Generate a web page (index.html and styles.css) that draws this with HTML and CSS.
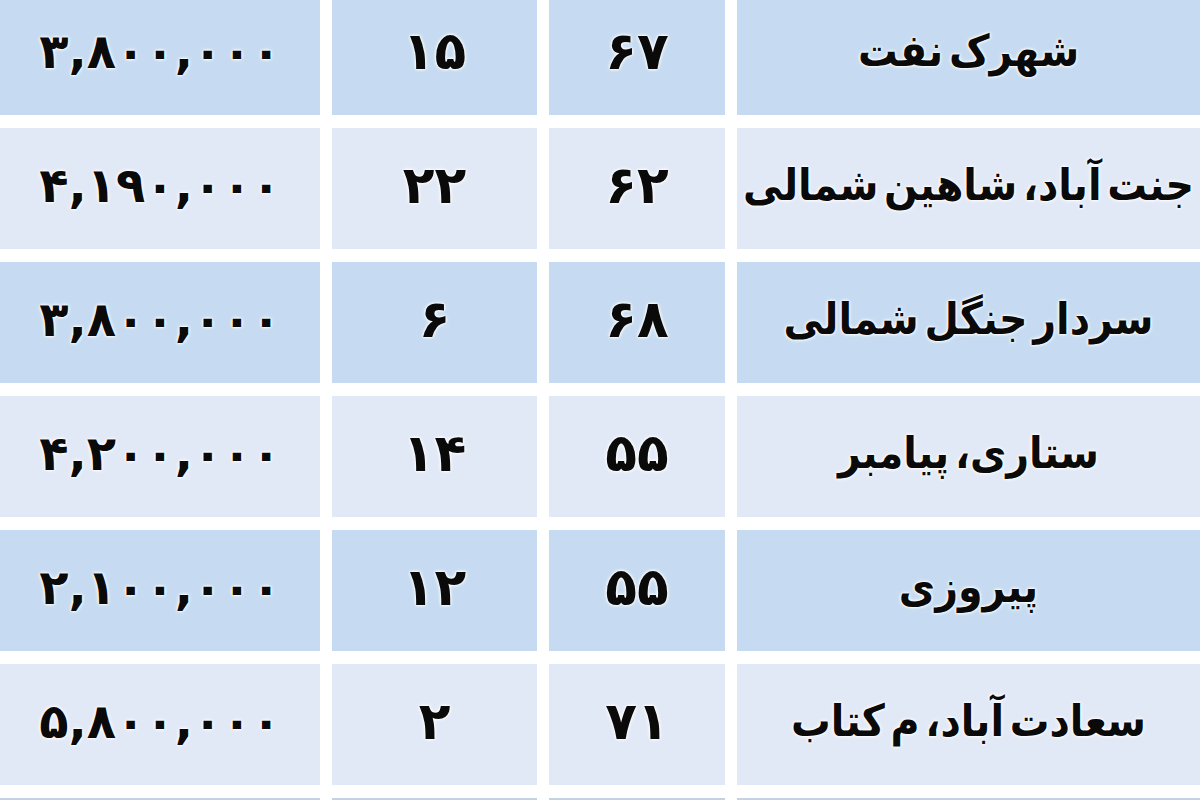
FILE: index.html
```html
<!DOCTYPE html>
<html lang="fa">
<head>
<meta charset="utf-8">
<title>جدول قیمت</title>
<link rel="stylesheet" href="styles.css">
</head>
<body>
<div class="table">
  <div class="row dark">
    <div class="cell price">۳,۸۰۰,۰۰۰</div>
    <div class="cell num">۱۵</div>
    <div class="cell num">۶۷</div>
    <div class="cell name">شهرک نفت</div>
  </div>
  <div class="row light">
    <div class="cell price">۴,۱۹۰,۰۰۰</div>
    <div class="cell num">۲۲</div>
    <div class="cell num">۶۲</div>
    <div class="cell name">جنت آباد، شاهین شمالی</div>
  </div>
  <div class="row dark">
    <div class="cell price">۳,۸۰۰,۰۰۰</div>
    <div class="cell num">۶</div>
    <div class="cell num">۶۸</div>
    <div class="cell name">سردار جنگل شمالی</div>
  </div>
  <div class="row light">
    <div class="cell price">۴,۲۰۰,۰۰۰</div>
    <div class="cell num">۱۴</div>
    <div class="cell num">۵۵</div>
    <div class="cell name">ستاری، پیامبر</div>
  </div>
  <div class="row dark">
    <div class="cell price">۲,۱۰۰,۰۰۰</div>
    <div class="cell num">۱۲</div>
    <div class="cell num">۵۵</div>
    <div class="cell name">پیروزی</div>
  </div>
  <div class="row light">
    <div class="cell price">۵,۸۰۰,۰۰۰</div>
    <div class="cell num">۲</div>
    <div class="cell num">۷۱</div>
    <div class="cell name">سعادت آباد، م کتاب</div>
  </div>
  <div class="row tail">
    <div class="cell price"></div>
    <div class="cell num"></div>
    <div class="cell num"></div>
    <div class="cell name"></div>
  </div>
</div>
</body>
</html>
```

FILE: styles.css
```css
html, body {
  margin: 0;
  padding: 0;
  background: #ffffff;
  overflow: hidden;
}

body {
  width: 1200px;
  height: 800px;
  font-family: "DejaVu Sans", sans-serif;
  font-weight: bold;
  color: #0a0a0a;
}

.table {
  display: flex;
  flex-direction: column;
  gap: 13px;
  height: 812px;
  margin-top: -6px;
  overflow: hidden;
}

.row {
  display: grid;
  grid-template-columns: 320px 205px 176px 463px;
  column-gap: 12px;
  height: 121px;
  flex: none;
}

.cell {
  display: flex;
  align-items: center;
  justify-content: center;
  text-shadow: 0 0 2px #ffffff, 0 0 3px #ffffff, 0 0 4px #ffffff;
}

.dark .cell {
  background: #c6dbf1;
}

.light .cell {
  background: #e2e9f6;
}

.tail .cell {
  background: #c3d3e4;
}

.price {
  direction: ltr;
  font-size: 48px;
  padding-bottom: 8px;
}

.num {
  direction: ltr;
  font-size: 52px;
  padding-bottom: 8px;
}

.name {
  direction: rtl;
  font-family: "DejaVu Sans Condensed", "DejaVu Sans", sans-serif;
  font-stretch: condensed;
  font-size: 44px;
  word-spacing: -8px;
  white-space: nowrap;
  padding-bottom: 8px;
}
```
